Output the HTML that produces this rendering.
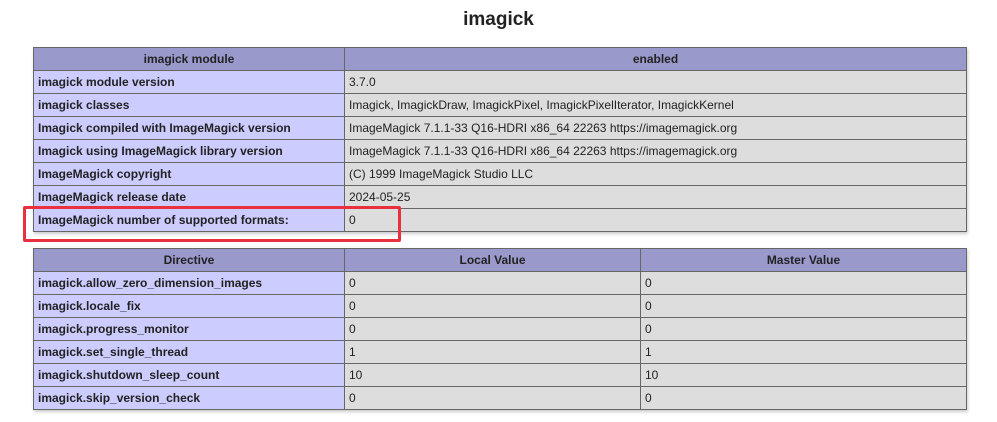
<!DOCTYPE html>
<html><head><meta charset="utf-8"><style>
body{margin:0;background:#fff;font-family:"Liberation Sans",Arial,sans-serif;width:997px;height:422px;overflow:hidden;position:relative}
h2{position:absolute;top:9px;left:0;width:997px;text-align:center;margin:0;font-size:19px;font-weight:bold;color:#222;line-height:22px}
table{position:absolute;left:33px;width:934px;border-collapse:collapse;box-shadow:1px 2px 3px #ccc;table-layout:fixed}
td,th{border:1px solid #666;font-size:12px;height:22px;padding:0 4px;color:#222;vertical-align:middle;line-height:14px;white-space:nowrap;overflow:hidden}
th{background:#9999cc;font-weight:bold;text-align:center}
td.e{background:#ccccff;font-weight:bold}
td.v{background:#dddddd}
.box{position:absolute;left:23px;top:206px;width:372px;height:30px;border:3px solid #e8303f;border-radius:2px}
</style></head><body>
<h2>imagick</h2>
<table style="top:47px">
<col style="width:311px"><col>
<tr><th>imagick module</th><th>enabled</th></tr>
<tr><td class="e">imagick module version</td><td class="v">3.7.0</td></tr>
<tr><td class="e">imagick classes</td><td class="v">Imagick, ImagickDraw, ImagickPixel, ImagickPixelIterator, ImagickKernel</td></tr>
<tr><td class="e">Imagick compiled with ImageMagick version</td><td class="v">ImageMagick 7.1.1-33 Q16-HDRI x86_64 22263 https://imagemagick.org</td></tr>
<tr><td class="e">Imagick using ImageMagick library version</td><td class="v">ImageMagick 7.1.1-33 Q16-HDRI x86_64 22263 https://imagemagick.org</td></tr>
<tr><td class="e">ImageMagick copyright</td><td class="v">(C) 1999 ImageMagick Studio LLC</td></tr>
<tr><td class="e">ImageMagick release date</td><td class="v">2024-05-25</td></tr>
<tr><td class="e">ImageMagick number of supported formats:</td><td class="v">0</td></tr>
</table>
<div class="box"></div>
<table style="top:248px">
<col style="width:311px"><col style="width:296px"><col>
<tr><th>Directive</th><th>Local Value</th><th>Master Value</th></tr>
<tr><td class="e">imagick.allow_zero_dimension_images</td><td class="v">0</td><td class="v">0</td></tr>
<tr><td class="e">imagick.locale_fix</td><td class="v">0</td><td class="v">0</td></tr>
<tr><td class="e">imagick.progress_monitor</td><td class="v">0</td><td class="v">0</td></tr>
<tr><td class="e">imagick.set_single_thread</td><td class="v">1</td><td class="v">1</td></tr>
<tr><td class="e">imagick.shutdown_sleep_count</td><td class="v">10</td><td class="v">10</td></tr>
<tr><td class="e">imagick.skip_version_check</td><td class="v">0</td><td class="v">0</td></tr>
</table>
</body></html>
